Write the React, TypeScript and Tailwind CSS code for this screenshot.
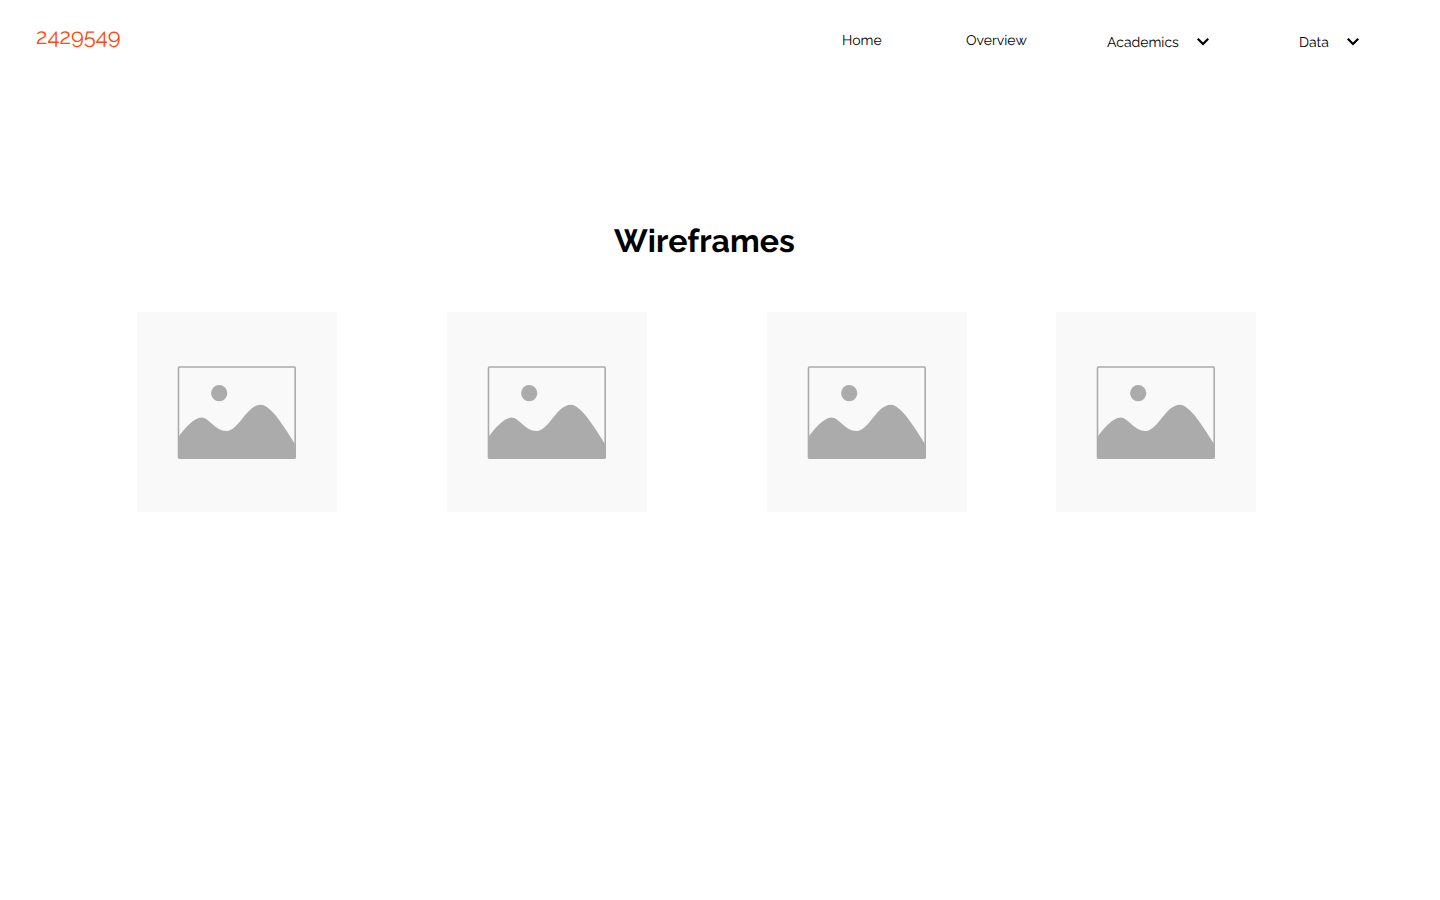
import React from "react";

function Chevron() {
  return (
    <svg className="-mt-0.5 h-2 w-3" viewBox="0 0 12 8" fill="none">
      <path d="M0.75 0.8 6 6.05 11.25 0.8" stroke="#000" strokeWidth="2.2" />
    </svg>
  );
}

function Placeholder() {
  return (
    <svg className="h-[200px] w-[200px] bg-[#f9f9f9]" viewBox="0 0 200 200">
      <rect x="41.5" y="55" width="116.7" height="91.2" rx="1" fill="none" stroke="#ababab" strokeWidth="1.6" />
      <circle cx="82.2" cy="81.2" r="8.1" fill="#ababab" />
      <path
        d="M41.5 125C47 117 57 105.5 64.5 105.5C72 105.5 78 119 89.7 119C101.5 119 110 92.8 123.7 92.8C134 92.8 148 116 158.3 132.5V146.5H41.5Z"
        fill="#ababab"
      />
    </svg>
  );
}

export default function App() {
  return (
    <div className="h-[900px] w-[1440px] overflow-hidden bg-white font-['Raleway','Lato',sans-serif] text-black antialiased [text-rendering:geometricPrecision]">
      <header className="flex h-[84px] items-start">
        <a className="ml-9 mt-[21px] h-8 w-[85px] whitespace-nowrap text-[22px] leading-8 text-[#ff4a0b]">2429549</a>
        <nav className="ml-[721px] flex items-start whitespace-nowrap pt-[31px] text-[14px] leading-[20px]">
          <a className="w-[124px]">Home</a>
          <a className="w-[141px]">Overview</a>
          <a className="flex w-[192px] items-center pt-0.5">
            <span className="w-[90px]">Academics</span>
            <Chevron />
          </a>
          <a className="flex items-center pt-0.5">
            <span className="w-12">Data</span>
            <Chevron />
          </a>
        </nav>
      </header>
      <main>
        <h1 className="ml-[614px] mt-[134px] h-[48px] whitespace-nowrap text-[32px] font-bold leading-[48px] tracking-[0.06px]">
          Wireframes
        </h1>
        <section className="ml-[137px] mt-[46px] flex">
          <div className="w-[310px]"><Placeholder /></div>
          <div className="w-[320px]"><Placeholder /></div>
          <div className="w-[289px]"><Placeholder /></div>
          <div className="w-[200px]"><Placeholder /></div>
        </section>
      </main>
    </div>
  );
}
